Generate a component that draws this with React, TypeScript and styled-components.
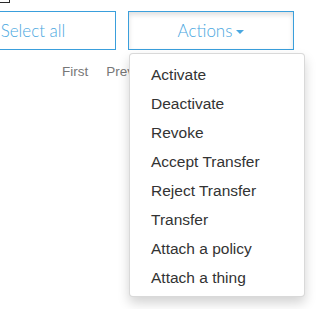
import styled, { createGlobalStyle } from 'styled-components';

const GlobalStyle = createGlobalStyle`
  * {
    box-sizing: border-box;
  }

  body {
    margin: 0;
    background: #fff;
    overflow: hidden;
  }
`;

const StyledPage = styled.div`
  position: relative;
  width: 320px;
  height: 309px;
  overflow: hidden;
  font-family: 'Liberation Sans', Arial, sans-serif;
`;

const EdgeBox = styled.div`
  width: 12px;
  height: 12px;
  margin: -9px 0 0 -2px;
  border: 1px solid #2b2b2b;
`;

const ButtonRow = styled.div`
  display: flex;
  gap: 12px;
  margin: 8px 0 0 -50px;
`;

const ToolbarButton = styled.button<{ $active?: boolean }>`
  display: flex;
  align-items: center;
  justify-content: center;
  width: 166px;
  height: 39px;
  padding: 0 12px;
  border: 1px solid #3a9fdc;
  border-radius: 0;
  background: #fff;
  color: #4aa7e0;
  font-family: Lato, 'Open Sans', sans-serif;
  font-weight: 300;
  font-size: 17px;
  box-shadow: ${({ $active }) =>
    $active ? 'inset 0 3px 5px rgba(0, 0, 0, 0.125)' : 'none'};
  cursor: pointer;
`;

const Caret = styled.span`
  display: inline-block;
  margin: 2px 0 0 4px;
  border-top: 4px solid currentColor;
  border-left: 4px solid transparent;
  border-right: 4px solid transparent;
`;

const Pager = styled.nav`
  display: flex;
  gap: 18px;
  margin: 12px 0 0 62px;
  font-size: 13.5px;
  line-height: 20px;
  color: #777;
`;

const DropdownMenu = styled.ul`
  position: absolute;
  top: 53px;
  left: 129px;
  width: 176px;
  margin: 0;
  padding: 6px 0 4px;
  list-style: none;
  background: #fff;
  border: 1px solid rgba(0, 0, 0, 0.15);
  border-radius: 4px;
  box-shadow: 0 6px 12px rgba(0, 0, 0, 0.175);
`;

const MenuItem = styled.li`
  height: 29px;
  padding: 0 21px;
  font-size: 15.5px;
  line-height: 29px;
  color: #333;
  white-space: nowrap;
`;

const actions = [
  'Activate',
  'Deactivate',
  'Revoke',
  'Accept Transfer',
  'Reject Transfer',
  'Transfer',
  'Attach a policy',
  'Attach a thing',
];

const App = () => (
  <StyledPage>
    <GlobalStyle />
    <EdgeBox />
    <ButtonRow>
      <ToolbarButton>Select all</ToolbarButton>
      <ToolbarButton $active>
        Actions
        <Caret />
      </ToolbarButton>
    </ButtonRow>
    <Pager>
      <span>First</span>
      <span>Previous</span>
    </Pager>
    <DropdownMenu>
      {actions.map((action) => (
        <MenuItem key={action}>{action}</MenuItem>
      ))}
    </DropdownMenu>
  </StyledPage>
);

export default App;
